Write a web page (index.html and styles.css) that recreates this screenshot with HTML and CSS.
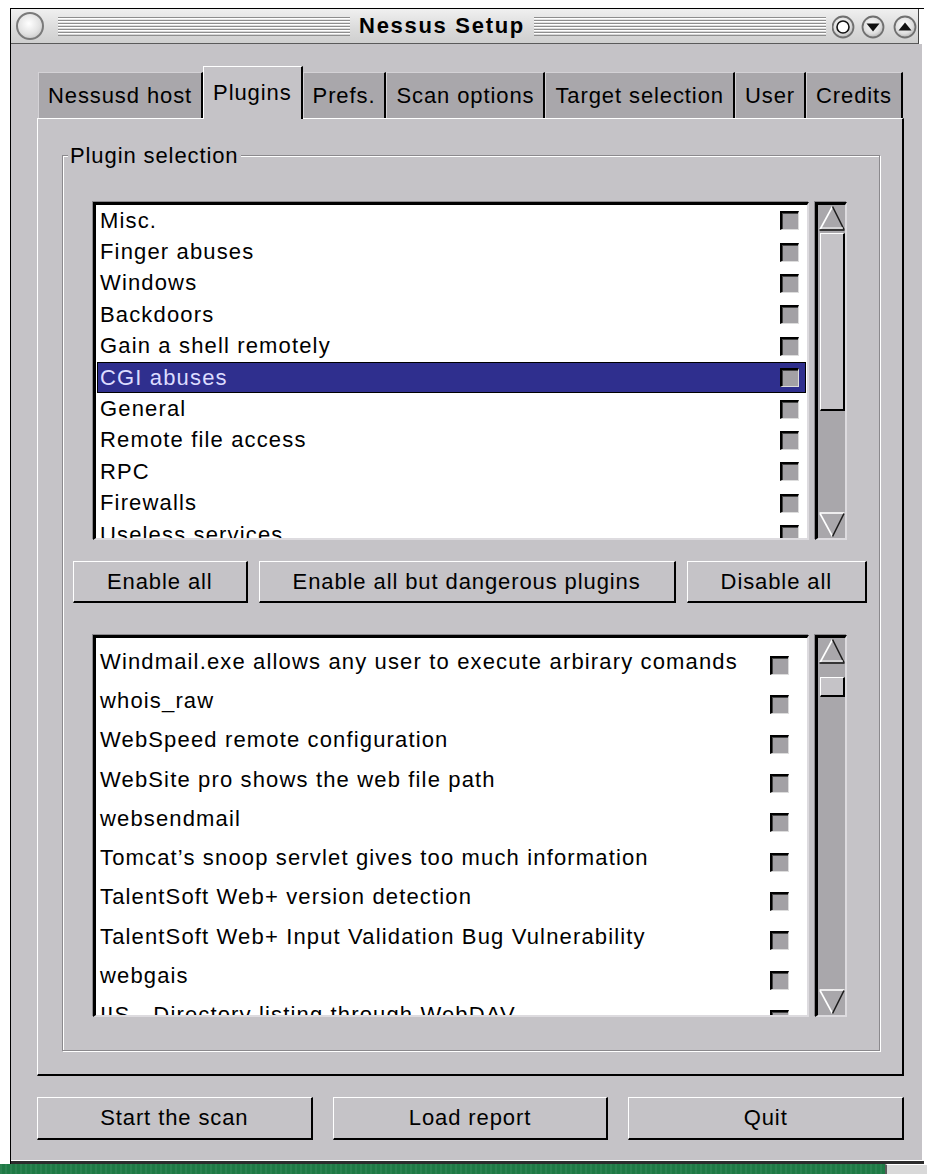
FILE: index.html
```html
<!DOCTYPE html>
<html lang="en">
<head>
<meta charset="utf-8">
<title>Nessus Setup</title>
<link rel="stylesheet" href="styles.css">
</head>
<body>
<div class="screen">
  <div class="window">
    <div class="titlebar">
      <span class="wm-close"></span>
      <span class="grip"></span>
      <span class="title">Nessus Setup</span>
      <span class="grip"></span>
      <svg class="wm-buttons" width="86" height="26" viewBox="0 0 86 26">
        <defs>
          <radialGradient id="knob" cx="45%" cy="40%" r="60%">
            <stop offset="0" stop-color="#ffffff"/>
            <stop offset="0.7" stop-color="#dedede"/>
            <stop offset="1" stop-color="#b4b4b4"/>
          </radialGradient>
        </defs>
        <circle cx="11" cy="13" r="10.5" fill="url(#knob)" stroke="#707070" stroke-width="1.8"/>
        <circle cx="11" cy="13" r="6" fill="#fff" stroke="#111" stroke-width="1.6"/>
        <circle cx="41" cy="13" r="10.5" fill="url(#knob)" stroke="#707070" stroke-width="1.8"/>
        <polygon points="34.5,9.5 47.5,9.5 41,17.5" fill="#111"/>
        <circle cx="73" cy="13" r="10.5" fill="url(#knob)" stroke="#707070" stroke-width="1.8"/>
        <polygon points="66.5,16.5 79.5,16.5 73,8.5" fill="#111"/>
      </svg>
    </div>

    <div class="client">
      <div class="notebook">
        <div class="tabs">
          <span class="tab">Nessusd host</span>
          <span class="tab active">Plugins</span>
          <span class="tab">Prefs.</span>
          <span class="tab">Scan options</span>
          <span class="tab">Target selection</span>
          <span class="tab">User</span>
          <span class="tab">Credits</span>
        </div>

        <div class="page">
          <fieldset class="group">
            <legend>Plugin selection</legend>
            <div class="group-body">

              <div class="listbox families">
                <ul class="list">
                  <li><span>Misc.</span><i class="check"></i></li>
                  <li><span>Finger abuses</span><i class="check"></i></li>
                  <li><span>Windows</span><i class="check"></i></li>
                  <li><span>Backdoors</span><i class="check"></i></li>
                  <li><span>Gain a shell remotely</span><i class="check"></i></li>
                  <li class="selected"><span>CGI abuses</span><i class="check"></i></li>
                  <li><span>General</span><i class="check"></i></li>
                  <li><span>Remote file access</span><i class="check"></i></li>
                  <li><span>RPC</span><i class="check"></i></li>
                  <li><span>Firewalls</span><i class="check"></i></li>
                  <li><span>Useless services</span><i class="check"></i></li>
                </ul>
                <div class="scrollbar">
                  <svg class="arrow" width="27" height="26" viewBox="0 0 27 26">
                    <polyline points="2,24.5 14.5,1.5" stroke="#fff" stroke-width="1.6" fill="none"/>
                    <polyline points="14.5,1.5 26,24.5" stroke="#1a1a1a" stroke-width="1.6" fill="none"/>
                    <line x1="3" y1="23" x2="25" y2="23" stroke="#fff" stroke-width="1"/>
                    <line x1="1.5" y1="25" x2="26.5" y2="25" stroke="#1a1a1a" stroke-width="1.6"/>
                  </svg>
                  <div class="trough"><div class="thumb families-thumb"></div></div>
                  <svg class="arrow" width="27" height="26" viewBox="0 0 27 26">
                    <line x1="1.5" y1="1" x2="26.5" y2="1" stroke="#fff" stroke-width="1.6"/>
                    <polyline points="2,1.5 14.5,24.5" stroke="#fff" stroke-width="1.6" fill="none"/>
                    <polyline points="14.5,24.5 26,1.5" stroke="#1a1a1a" stroke-width="1.6" fill="none"/>
                  </svg>
                </div>
              </div>

              <div class="button-row">
                <button class="btn">Enable all</button>
                <button class="btn">Enable all but dangerous plugins</button>
                <button class="btn">Disable all</button>
              </div>

              <div class="listbox plugins">
                <ul class="list">
                  <li><span>Windmail.exe allows any user to execute arbirary comands</span><i class="check"></i></li>
                  <li><span>whois_raw</span><i class="check"></i></li>
                  <li><span>WebSpeed remote configuration</span><i class="check"></i></li>
                  <li><span>WebSite pro shows the web file path</span><i class="check"></i></li>
                  <li><span>websendmail</span><i class="check"></i></li>
                  <li><span>Tomcat’s snoop servlet gives too much information</span><i class="check"></i></li>
                  <li><span>TalentSoft Web+ version detection</span><i class="check"></i></li>
                  <li><span>TalentSoft Web+ Input Validation Bug Vulnerability</span><i class="check"></i></li>
                  <li><span>webgais</span><i class="check"></i></li>
                  <li><span>IIS - Directory listing through WebDAV</span><i class="check"></i></li>
                </ul>
                <div class="scrollbar">
                  <svg class="arrow" width="27" height="26" viewBox="0 0 27 26">
                    <polyline points="2,24.5 14.5,1.5" stroke="#fff" stroke-width="1.6" fill="none"/>
                    <polyline points="14.5,1.5 26,24.5" stroke="#1a1a1a" stroke-width="1.6" fill="none"/>
                    <line x1="3" y1="23" x2="25" y2="23" stroke="#fff" stroke-width="1"/>
                    <line x1="1.5" y1="25" x2="26.5" y2="25" stroke="#1a1a1a" stroke-width="1.6"/>
                  </svg>
                  <div class="trough"><div class="thumb plugins-thumb"></div></div>
                  <svg class="arrow" width="27" height="26" viewBox="0 0 27 26">
                    <line x1="1.5" y1="1" x2="26.5" y2="1" stroke="#fff" stroke-width="1.6"/>
                    <polyline points="2,1.5 14.5,24.5" stroke="#fff" stroke-width="1.6" fill="none"/>
                    <polyline points="14.5,24.5 26,1.5" stroke="#1a1a1a" stroke-width="1.6" fill="none"/>
                  </svg>
                </div>
              </div>

            </div>
          </fieldset>
        </div>
      </div>

      <div class="actions">
        <button class="btn">Start the scan</button>
        <button class="btn">Load report</button>
        <button class="btn">Quit</button>
      </div>
    </div>
  </div>
  <div class="taskbar"><span class="tray"></span></div>
</div>
</body>
</html>
```

FILE: styles.css
```css
* {
  box-sizing: border-box;
}

html,
body {
  margin: 0;
  padding: 0;
  background: #ffffff;
}

body {
  font-family: "Liberation Sans", Arial, sans-serif;
  font-size: 22px;
  letter-spacing: 0.9px;
  color: #000;
}

.screen {
  width: 927px;
  height: 1174px;
  overflow: hidden;
  display: flex;
  flex-direction: column;
  background: #ffffff;
}

/* ---------- window frame ---------- */

.window {
  margin: 8px 0 0 10px;
  width: 914px;
  height: 1156px;
  border-top: 1px solid #000;
  border-left: 1px solid #000;
  display: flex;
  flex-direction: column;
}

.titlebar {
  height: 35px;
  margin-right: 5px;
  display: flex;
  align-items: center;
  background: linear-gradient(#f0f0f0, #dadada 60%, #cfcfcf);
  border-bottom: 1px solid #5a5a5a;
  border-right: 1px solid #444;
}

.wm-close {
  flex: none;
  width: 28px;
  height: 28px;
  margin-left: 5px;
  border-radius: 50%;
  border: 2px solid #7a7a7a;
  background: radial-gradient(circle at 45% 40%, #ffffff, #e2e2e2 55%, #b9b9b9);
}

.grip {
  flex: 1;
  height: 19px;
  background: repeating-linear-gradient(
    to bottom,
    #8e8e8e 0,
    #8e8e8e 1px,
    #ffffff 1px,
    #ffffff 2px,
    transparent 2px,
    transparent 3px
  );
}

.wm-close + .grip {
  margin-left: 14px;
}

.title {
  padding: 0 9px;
  font-weight: bold;
  letter-spacing: 1.7px;
  white-space: nowrap;
}

.wm-buttons {
  flex: none;
  margin-left: 6px;
  margin-top: 2px;
}

/* ---------- client area ---------- */

.client {
  flex: 1;
  background: #c5c3c7;
  padding: 22px 20px 20px 26px;
  border-bottom: 3px solid #2c2c2c;
  box-shadow: inset 0 -1px 0 #ffffff, inset -2px 0 0 #ffffff;
  display: flex;
  flex-direction: column;
}

/* ---------- notebook ---------- */

.tabs {
  display: flex;
  align-items: flex-end;
  height: 52px;
  padding-left: 1px;
}

.tab {
  height: 46px;
  padding: 0 9px;
  display: flex;
  align-items: center;
  white-space: nowrap;
  background: #a9a7ab;
  border-top: 1px solid #d4d2d6;
  border-left: 1px solid #d4d2d6;
  border-right: 2px solid #000;
}

.tab.active {
  height: 53px;
  margin-bottom: -1px;
  position: relative;
  z-index: 1;
  background: #c5c3c7;
  border-top-color: #ffffff;
  border-left-color: #ffffff;
  padding-bottom: 1px;
}

.page {
  border-top: 1px solid #ffffff;
  border-left: 1px solid #ffffff;
  border-right: 2px solid #000;
  border-bottom: 2px solid #000;
  padding: 24px 22px 23px 24px;
}

/* ---------- group box ---------- */

.group {
  margin: 0;
  padding: 0;
  min-width: 0;
  border: 1px solid #8b898d;
  box-shadow: inset 1px 1px 0 #ffffff, 1px 1px 0 #ffffff;
}

.group legend {
  margin-left: 5px;
  padding: 0 2px;
  line-height: 25px;
  background: #c5c3c7;
}

.group-body {
  padding: 34px 32px 33px 30px;
}

/* ---------- list boxes ---------- */

.listbox {
  display: flex;
  gap: 6px;
}

.families {
  height: 338px;
}

.plugins {
  height: 382px;
}

.list {
  flex: 1;
  margin: 0;
  padding: 0;
  list-style: none;
  overflow: hidden;
  letter-spacing: 1.15px;
  background: #ffffff;
  border-style: solid;
  border-width: 3px 2px 2px 3px;
  border-color: #000 #dddbdf #dddbdf #000;
  box-shadow: -1px -1px 0 #8b898d;
}

.list li {
  display: flex;
  align-items: center;
  justify-content: space-between;
  white-space: nowrap;
  padding-left: 4px;
}

.families li {
  height: 31.4px;
  padding-right: 8px;
}

.plugins .list {
  padding-top: 4px;
}

.plugins li {
  height: 39.3px;
  padding-right: 18px;
}

.list li.selected {
  margin: 0 1px;
  padding-left: 3px;
  padding-right: 7px;
  background: #2f2f8e;
  color: #dcdcff;
  box-shadow: inset 0 0 0 1px #000;
}

.check {
  flex: none;
  width: 19px;
  height: 19px;
  background: #a3a1a5;
  border-top: 2px solid #000;
  border-left: 2px solid #000;
  border-right: 1px solid #dcdcdc;
  border-bottom: 1px solid #dcdcdc;
  box-shadow: inset 1px 1px 0 #444;
}

.plugins .check {
  margin-top: 8px;
}

/* ---------- scrollbars ---------- */

.scrollbar {
  flex: none;
  width: 32px;
  display: flex;
  flex-direction: column;
  background: #a9a7ab;
  border-style: solid;
  border-width: 3px 2px 2px 3px;
  border-color: #000 #dddbdf #dddbdf #000;
  box-shadow: -1px -1px 0 #8b898d;
}

.arrow {
  flex: none;
  display: block;
}

.trough {
  flex: 1;
  padding-left: 2px;
}

.thumb {
  background: #c5c3c7;
  border-top: 1px solid #ffffff;
  border-left: 1px solid #ffffff;
  border-right: 2px solid #000;
  border-bottom: 2px solid #000;
}

.families-thumb {
  margin-top: 2px;
  height: 178px;
}

.plugins-thumb {
  margin-top: 13px;
  height: 20px;
}

/* ---------- buttons ---------- */

.btn {
  font: inherit;
  letter-spacing: inherit;
  color: #000;
  background: #c5c3c7;
  border-style: solid;
  border-width: 1px 2px 2px 1px;
  border-color: #ffffff #000 #000 #ffffff;
  border-radius: 0;
  padding: 0 30px;
  white-space: nowrap;
}

.button-row {
  display: flex;
  gap: 11px;
  margin: 21px -20px 32px;
}

.button-row .btn {
  flex: 1 1 auto;
  height: 42px;
}

.actions {
  display: flex;
  gap: 20px;
  margin-top: 21px;
}

.actions .btn {
  flex: 1;
  height: 43px;
}

/* ---------- desktop strip ---------- */

.taskbar {
  flex: none;
  height: 10px;
  display: flex;
  justify-content: flex-end;
  background:
    repeating-linear-gradient(90deg, rgba(255, 255, 255, 0.06) 0 2px, transparent 2px 5px),
    #1e7a45;
}

.tray {
  width: 42px;
  background: #d9d9d9;
  border-left: 2px solid #5a5a5a;
  border-top: 1px solid #ffffff;
}
```
